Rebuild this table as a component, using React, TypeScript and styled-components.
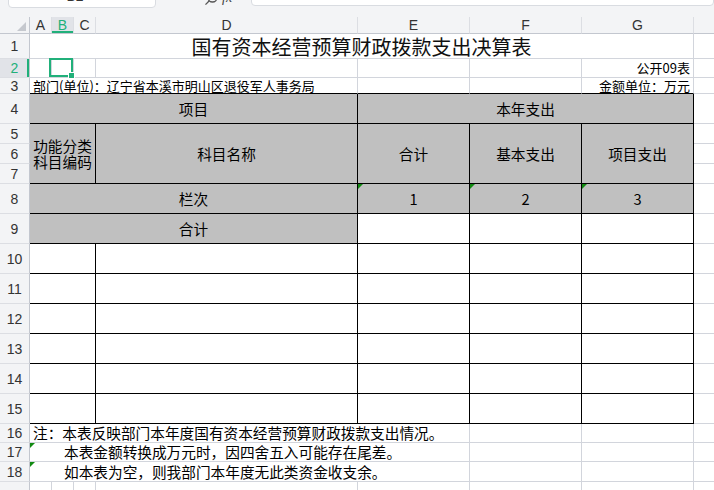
import React from 'react';
import styled, { createGlobalStyle } from 'styled-components';

const GlobalStyle = createGlobalStyle`
  html, body { margin: 0; padding: 0; background: #fff; overflow: hidden; }
  body { font-family: "Noto Sans CJK SC", "Liberation Sans", sans-serif; }
`;

type Line = 'grid' | 'black' | 'none';
const GREEN = '#21b07a';
const HEAD_BG = '#f3f4f6';
const HEAD_SEL = '#e1e3e8';
const HEAD_SEP = '#dcdee3';
const HEAD_EDGE = '#c3c7cf';
const GRID = '#d2d5dc';
const FILL = '#c0c0c0';

const lineColor = (l: Line) => (l === 'black' ? '#000' : l === 'grid' ? GRID : 'transparent');

const Page = styled.div`
  width: 714px;
  height: 490px;
  overflow: hidden;
  background: #fff;
`;

const TopBar = styled.div`
  height: 17px;
  background: ${HEAD_BG};
  display: flex;
  align-items: flex-start;
  overflow: hidden;
`;

const NameBox = styled.div`
  margin-left: 8px;
  margin-top: -14px;
  width: 148px;
  height: 22px;
  box-sizing: border-box;
  background: #fff;
  border: 1px solid #d9dce1;
  border-radius: 4px;
  display: flex;
  align-items: flex-end;
  justify-content: center;
  padding: 0 14px 4px 0;
  font-family: "Liberation Sans", sans-serif;
  font-size: 14px;
  line-height: 14px;
  color: #333;
`;

const SearchIcon = styled.svg`
  margin-left: 48px;
  margin-top: -8px;
  flex: none;
`;

const Fx = styled.span`
  margin-left: 4px;
  margin-top: -9px;
  font-family: "Liberation Serif", serif;
  font-style: italic;
  font-size: 14px;
  line-height: 14px;
  color: #444;
`;

const FormulaInput = styled.div`
  margin-left: 19px;
  margin-top: -14px;
  height: 20px;
  flex: 1;
  box-sizing: border-box;
  background: #fff;
  border: 1px solid #d9dce1;
  border-radius: 4px;
`;

const Sheet = styled.div`
  display: grid;
  grid-template-columns: 30px 22px 22px 22px 262px 112px 112px 112px 112px;
  grid-template-rows: 17px 25px 19px 16px 30px 20px 20px 20px 30px 30px repeat(6, 30px) 19px 19px 20px 30px;
  width: max-content;
`;

const Corner = styled.div`
  grid-column: 1;
  grid-row: 1;
  background: ${HEAD_BG};
  border-right: 1px solid ${HEAD_EDGE};
  border-bottom: 1px solid ${HEAD_EDGE};
  box-sizing: border-box;
  position: relative;
`;

const CornerMark = styled.span`
  position: absolute;
  right: 3px;
  bottom: 2px;
  width: 0;
  height: 0;
  border-left: 9px solid transparent;
  border-bottom: 9px solid #c5c8ce;
`;

const ColHead = styled.div<{ $col: number; $sel?: boolean }>`
  grid-column: ${(p) => p.$col};
  grid-row: 1;
  box-sizing: border-box;
  background: ${(p) => (p.$sel ? HEAD_SEL : HEAD_BG)};
  border-right: 1px solid ${HEAD_SEP};
  border-bottom: 1px solid ${HEAD_EDGE};
  box-shadow: ${(p) => (p.$sel ? `inset 0 -2px 0 ${GREEN}` : 'none')};
  display: flex;
  align-items: center;
  justify-content: center;
  font-family: "Liberation Sans", Arial, sans-serif;
  font-size: 14px;
  color: ${(p) => (p.$sel ? GREEN : '#333')};
`;

const RowHead = styled.div<{ $row: number; $sel?: boolean }>`
  grid-column: 1;
  grid-row: ${(p) => p.$row};
  box-sizing: border-box;
  background: ${(p) => (p.$sel ? HEAD_SEL : HEAD_BG)};
  border-right: 1px solid ${HEAD_EDGE};
  border-bottom: 1px solid ${HEAD_SEP};
  box-shadow: ${(p) => (p.$sel ? `inset -2px 0 0 ${GREEN}` : 'none')};
  display: flex;
  align-items: center;
  justify-content: center;
  font-family: "Liberation Sans", Arial, sans-serif;
  font-size: 14px;
  color: ${(p) => (p.$sel ? GREEN : '#333')};
`;

interface CellProps {
  $col: number;
  $row: number;
  $cs?: number;
  $rs?: number;
  $r?: Line;
  $b?: Line;
  $fill?: boolean;
  $align?: 'left' | 'center' | 'right';
  $size?: number;
  $pl?: number;
  $pr?: number;
}

const Cell = styled.div<CellProps>`
  grid-column: ${(p) => p.$col} / span ${(p) => p.$cs ?? 1};
  grid-row: ${(p) => p.$row} / span ${(p) => p.$rs ?? 1};
  box-sizing: border-box;
  border-right: 1px solid ${(p) => lineColor(p.$r ?? 'grid')};
  border-bottom: 1px solid ${(p) => lineColor(p.$b ?? 'grid')};
  background: ${(p) => (p.$fill ? FILL : '#fff')};
  display: flex;
  align-items: center;
  justify-content: ${(p) => (p.$align === 'left' ? 'flex-start' : p.$align === 'right' ? 'flex-end' : 'center')};
  padding-left: ${(p) => p.$pl ?? 0}px;
  padding-right: ${(p) => p.$pr ?? 0}px;
  font-family: "Noto Sans CJK SC", sans-serif;
  font-size: ${(p) => p.$size ?? 14.67}px;
  line-height: 1.05;
  color: #000;
  white-space: pre;
  position: relative;
  min-width: 0;
`;

const TitleCell = styled(Cell)`
  font-size: 20px;
  align-items: flex-end;
  padding-bottom: 1px;
  color: #111;
`;

const Stacked = styled.span`
  text-align: center;
  line-height: 16px;
`;

const Flag = styled.span`
  position: absolute;
  top: 0;
  left: 0;
  width: 0;
  height: 0;
  border-top: 5px solid #128a12;
  border-right: 5px solid transparent;
`;

const Selection = styled.div`
  position: absolute;
  left: -3px;
  top: -1px;
  right: 0;
  bottom: 0;
  border: 2px solid ${GREEN};
  z-index: 2;
`;

const Handle = styled.span`
  position: absolute;
  right: -4px;
  bottom: -4px;
  width: 5px;
  height: 5px;
  background: ${GREEN};
  border: 1px solid #fff;
`;

const cols = ['A', 'B', 'C', 'D', 'E', 'F', 'G', 'H'];
const bodyRows = [10, 11, 12, 13, 14, 15];

export default function App() {
  return (
    <Page>
      <GlobalStyle />
      <TopBar>
        <NameBox>B2</NameBox>
        <SearchIcon width="14" height="14" viewBox="0 0 14 14" fill="none" stroke="#555" strokeWidth="1.3">
          <circle cx="8.5" cy="5.5" r="4.5" />
          <line x1="5.3" y1="8.8" x2="1.5" y2="12.6" />
        </SearchIcon>
        <Fx>fx</Fx>
        <FormulaInput />
      </TopBar>
      <Sheet>
        <Corner>
          <CornerMark />
        </Corner>
        {cols.map((c, i) => (
          <ColHead key={c} $col={i + 2} $sel={c === 'B'}>
            {c}
          </ColHead>
        ))}
        {Array.from({ length: 19 }, (_, i) => (
          <RowHead key={i} $row={i + 2} $sel={i + 1 === 2}>
            {i + 1}
          </RowHead>
        ))}

        {/* Row 1 */}
        <TitleCell $col={2} $row={2} $cs={7}>国有资本经营预算财政拨款支出决算表</TitleCell>
        <Cell $col={9} $row={2} />

        {/* Row 2 */}
        <Cell $col={2} $row={3} />
        <Cell $col={3} $row={3}>
          <Selection>
            <Handle />
          </Selection>
        </Cell>
        <Cell $col={4} $row={3} />
        <Cell $col={5} $row={3} />
        <Cell $col={6} $row={3} />
        <Cell $col={7} $row={3} />
        <Cell $col={8} $row={3} $align="right" $pr={3} $size={13}>公开09表</Cell>
        <Cell $col={9} $row={3} />

        {/* Row 3 */}
        <Cell $col={2} $row={4} $cs={4} $b="black" $align="left" $pl={3} $size={13}>
          部门(单位)：辽宁省本溪市明山区退役军人事务局
        </Cell>
        <Cell $col={6} $row={4} $b="black" />
        <Cell $col={7} $row={4} $b="black" />
        <Cell $col={8} $row={4} $b="black" $align="right" $pr={3} $size={13}>金额单位：万元</Cell>
        <Cell $col={9} $row={4} />

        {/* Row 4 */}
        <Cell $col={2} $row={5} $cs={4} $fill $r="black" $b="black">项目</Cell>
        <Cell $col={6} $row={5} $cs={3} $fill $r="black" $b="black">本年支出</Cell>
        <Cell $col={9} $row={5} />

        {/* Rows 5-7 */}
        <Cell $col={2} $row={6} $cs={3} $rs={3} $fill $r="black" $b="black">
          <Stacked>{'功能分类\n科目编码'}</Stacked>
        </Cell>
        <Cell $col={5} $row={6} $rs={3} $fill $r="black" $b="black">科目名称</Cell>
        <Cell $col={6} $row={6} $rs={3} $fill $r="black" $b="black">合计</Cell>
        <Cell $col={7} $row={6} $rs={3} $fill $r="black" $b="black">基本支出</Cell>
        <Cell $col={8} $row={6} $rs={3} $fill $r="black" $b="black">项目支出</Cell>
        <Cell $col={9} $row={6} />
        <Cell $col={9} $row={7} />
        <Cell $col={9} $row={8} />

        {/* Row 8 */}
        <Cell $col={2} $row={9} $cs={4} $fill $r="black" $b="black">栏次</Cell>
        <Cell $col={6} $row={9} $fill $r="black" $b="black">
          <Flag />1
        </Cell>
        <Cell $col={7} $row={9} $fill $r="black" $b="black">
          <Flag />2
        </Cell>
        <Cell $col={8} $row={9} $fill $r="black" $b="black">
          <Flag />3
        </Cell>
        <Cell $col={9} $row={9} />

        {/* Row 9 */}
        <Cell $col={2} $row={10} $cs={4} $fill $r="black" $b="black">合计</Cell>
        <Cell $col={6} $row={10} $r="black" $b="black" />
        <Cell $col={7} $row={10} $r="black" $b="black" />
        <Cell $col={8} $row={10} $r="black" $b="black" />
        <Cell $col={9} $row={10} />

        {/* Rows 10-15 */}
        {bodyRows.map((n) => (
          <React.Fragment key={n}>
            <Cell $col={2} $row={n + 1} $cs={3} $r="black" $b="black" />
            <Cell $col={5} $row={n + 1} $r="black" $b="black" />
            <Cell $col={6} $row={n + 1} $r="black" $b="black" />
            <Cell $col={7} $row={n + 1} $r="black" $b="black" />
            <Cell $col={8} $row={n + 1} $r="black" $b="black" />
            <Cell $col={9} $row={n + 1} />
          </React.Fragment>
        ))}

        {/* Rows 16-18 */}
        <Cell $col={2} $row={17} $cs={5} $align="left" $pl={3}>
          注：本表反映部门本年度国有资本经营预算财政拨款支出情况。
        </Cell>
        <Cell $col={7} $row={17} />
        <Cell $col={8} $row={17} />
        <Cell $col={9} $row={17} />

        <Cell $col={2} $row={18} $cs={5} $align="left" $pl={34}>
          <Flag />
          本表金额转换成万元时，因四舍五入可能存在尾差。
        </Cell>
        <Cell $col={7} $row={18} />
        <Cell $col={8} $row={18} />
        <Cell $col={9} $row={18} />

        <Cell $col={2} $row={19} $cs={5} $align="left" $pl={34}>
          <Flag />
          如本表为空，则我部门本年度无此类资金收支余。
        </Cell>
        <Cell $col={7} $row={19} />
        <Cell $col={8} $row={19} />
        <Cell $col={9} $row={19} />

        {/* Row 19 */}
        {[2, 3, 4, 5, 6, 7, 8, 9].map((c) => (
          <Cell key={c} $col={c} $row={20} />
        ))}
      </Sheet>
    </Page>
  );
}
